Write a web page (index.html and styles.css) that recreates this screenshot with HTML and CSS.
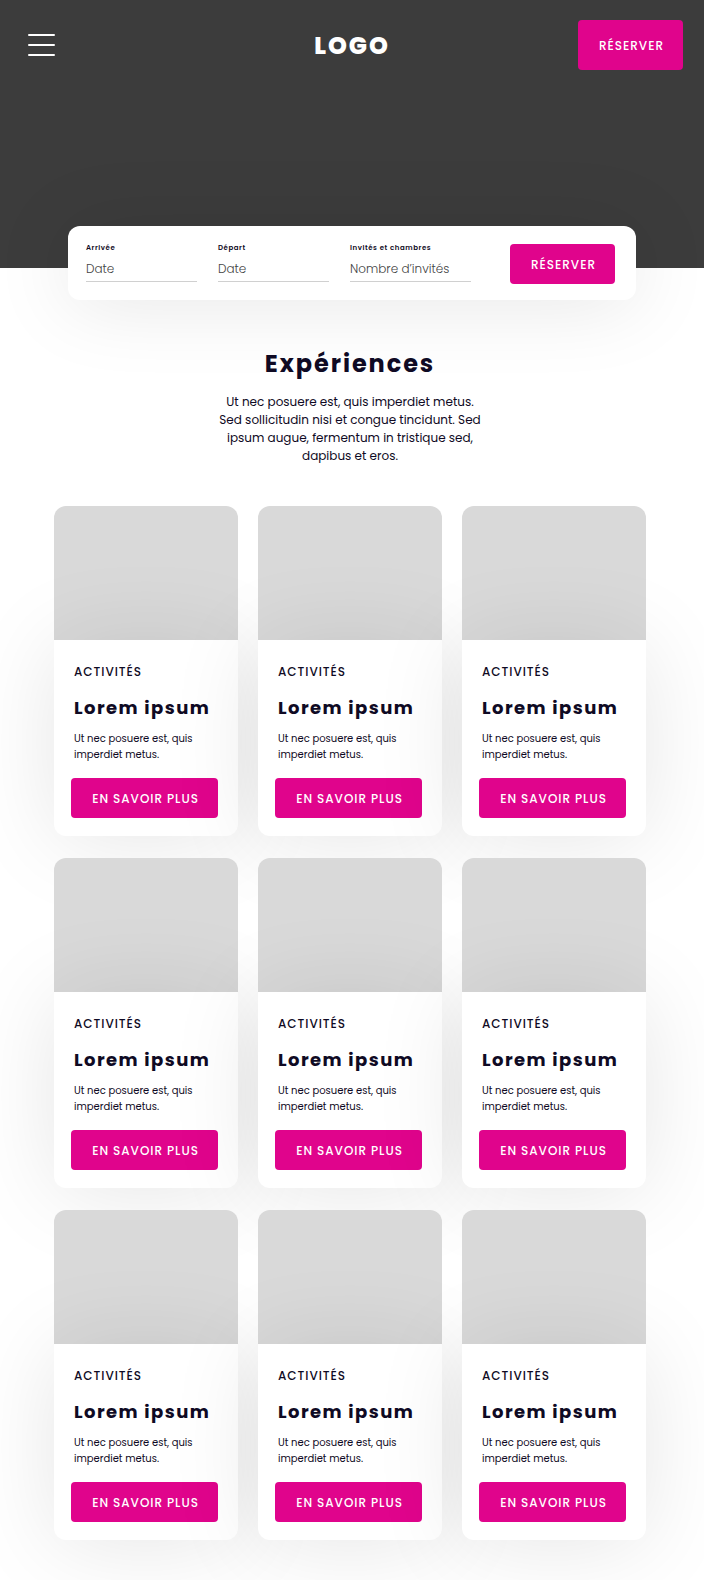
FILE: index.html
```html
<!DOCTYPE html>
<html lang="fr">
<head>
  <meta charset="UTF-8">
  <meta name="viewport" content="width=device-width, initial-scale=1">
  <title>Expériences</title>
  <link rel="stylesheet" href="styles.css">
</head>
<body>
  <header class="hero">
    <nav class="navbar">
      <button class="menu-btn" type="button" aria-label="Menu">
        <svg width="27" height="22" viewBox="0 0 27 22" fill="none" stroke="#fff" stroke-width="2" stroke-linecap="round">
          <path d="M1 1h25M1 11h25M1 21h25"/>
        </svg>
      </button>
      <a class="logo" href="#">LOGO</a>
      <button class="btn btn-nav" type="button">RÉSERVER</button>
    </nav>
  </header>

  <!-- Booking form -->
  <form class="search">
    <div class="field">
      <label for="arrivee">Arrivée</label>
      <input type="text" id="arrivee" placeholder="Date">
    </div>
    <div class="field">
      <label for="depart">Départ</label>
      <input type="text" id="depart" placeholder="Date">
    </div>
    <div class="field field-guests">
      <label for="invites">Invités et chambres</label>
      <input type="text" id="invites" placeholder="Nombre d’invités">
    </div>
    <button class="btn btn-search" type="button">RÉSERVER</button>
  </form>

  <main class="experiences">
    <h1>Expériences</h1>
    <p class="intro">Ut nec posuere est, quis imperdiet metus.<br>Sed sollicitudin nisi et congue tincidunt. Sed<br>ipsum augue, fermentum in tristique sed,<br>dapibus et eros.</p>

    <div class="cards">
      <article class="card">
        <div class="card-image"></div>
        <div class="card-body">
          <p class="category">ACTIVITÉS</p>
          <h2>Lorem ipsum</h2>
          <p class="text">Ut nec posuere est, quis<br>imperdiet metus.</p>
          <button class="btn btn-card" type="button">EN SAVOIR PLUS</button>
        </div>
      </article>
      <article class="card">
        <div class="card-image"></div>
        <div class="card-body">
          <p class="category">ACTIVITÉS</p>
          <h2>Lorem ipsum</h2>
          <p class="text">Ut nec posuere est, quis<br>imperdiet metus.</p>
          <button class="btn btn-card" type="button">EN SAVOIR PLUS</button>
        </div>
      </article>
      <article class="card">
        <div class="card-image"></div>
        <div class="card-body">
          <p class="category">ACTIVITÉS</p>
          <h2>Lorem ipsum</h2>
          <p class="text">Ut nec posuere est, quis<br>imperdiet metus.</p>
          <button class="btn btn-card" type="button">EN SAVOIR PLUS</button>
        </div>
      </article>
      <article class="card">
        <div class="card-image"></div>
        <div class="card-body">
          <p class="category">ACTIVITÉS</p>
          <h2>Lorem ipsum</h2>
          <p class="text">Ut nec posuere est, quis<br>imperdiet metus.</p>
          <button class="btn btn-card" type="button">EN SAVOIR PLUS</button>
        </div>
      </article>
      <article class="card">
        <div class="card-image"></div>
        <div class="card-body">
          <p class="category">ACTIVITÉS</p>
          <h2>Lorem ipsum</h2>
          <p class="text">Ut nec posuere est, quis<br>imperdiet metus.</p>
          <button class="btn btn-card" type="button">EN SAVOIR PLUS</button>
        </div>
      </article>
      <article class="card">
        <div class="card-image"></div>
        <div class="card-body">
          <p class="category">ACTIVITÉS</p>
          <h2>Lorem ipsum</h2>
          <p class="text">Ut nec posuere est, quis<br>imperdiet metus.</p>
          <button class="btn btn-card" type="button">EN SAVOIR PLUS</button>
        </div>
      </article>
      <article class="card">
        <div class="card-image"></div>
        <div class="card-body">
          <p class="category">ACTIVITÉS</p>
          <h2>Lorem ipsum</h2>
          <p class="text">Ut nec posuere est, quis<br>imperdiet metus.</p>
          <button class="btn btn-card" type="button">EN SAVOIR PLUS</button>
        </div>
      </article>
      <article class="card">
        <div class="card-image"></div>
        <div class="card-body">
          <p class="category">ACTIVITÉS</p>
          <h2>Lorem ipsum</h2>
          <p class="text">Ut nec posuere est, quis<br>imperdiet metus.</p>
          <button class="btn btn-card" type="button">EN SAVOIR PLUS</button>
        </div>
      </article>
      <article class="card">
        <div class="card-image"></div>
        <div class="card-body">
          <p class="category">ACTIVITÉS</p>
          <h2>Lorem ipsum</h2>
          <p class="text">Ut nec posuere est, quis<br>imperdiet metus.</p>
          <button class="btn btn-card" type="button">EN SAVOIR PLUS</button>
        </div>
      </article>
    </div>
  </main>
</body>
</html>
```
FILE: styles.css
```css
* {
  box-sizing: border-box;
  margin: 0;
  padding: 0;
}
body {
  font-family: Poppins, Inter, sans-serif;
  background: #fff;
  color: #0f0a24;
  overflow-x: hidden;
}

/* Header */
.hero {
  background: #3c3c3c;
  min-height: 268px;
  padding: 20px 21px 0;
}
.navbar {
  display: grid;
  grid-template-columns: 1fr auto 1fr;
  align-items: center;
}
.menu-btn {
  display: flex;
  justify-self: start;
  margin-left: 7px;
  background: none;
  border: none;
  cursor: pointer;
}
.logo {
  color: #fff;
  font-size: 24px;
  font-weight: 800;
  letter-spacing: 0.08em;
  text-decoration: none;
}

/* Buttons */
.btn {
  height: 40px;
  padding: 2px 0 0 2px;
  background: #e0048c;
  color: #fff;
  border: none;
  border-radius: 4px;
  font-family: inherit;
  font-size: 12px;
  font-weight: 500;
  letter-spacing: 0.08em;
  white-space: nowrap;
  cursor: pointer;
}
.btn-nav {
  width: 105px;
  height: 50px;
  justify-self: end;
}
.btn-search {
  width: 105px;
  margin-left: 18px;
}
.btn-card {
  width: 147px;
  margin-left: -3px;
}

/* Booking form */
.search {
  display: flex;
  align-items: flex-start;
  gap: 21px;
  margin: -42px 68px 0;
  padding: 18px 21px 16px 18px;
  background: #fff;
  border-radius: 12px;
  box-shadow: 0 4px 80px rgba(0, 0, 0, 0.1);
}
.field {
  flex: 1;
  min-width: 0;
}
.field-guests {
  flex: 0 0 121px;
}
.field label {
  display: block;
  font-size: 7px;
  font-weight: 600;
  line-height: 8px;
  letter-spacing: 0.08em;
}
.field input {
  display: block;
  width: 100%;
  height: 30px;
  padding-top: 4px;
  border: none;
  border-bottom: 1px solid #d0d0d0;
  background: none;
  font-family: inherit;
  font-size: 12px;
  font-weight: 300;
}
.field input::placeholder {
  color: #444;
  opacity: 1;
}

/* Experiences */
.experiences {
  padding: 46px 58px 40px 54px;
}
h1 {
  font-size: 24px;
  line-height: 36px;
  font-weight: 700;
  letter-spacing: 0.08em;
  text-align: center;
}
.intro {
  margin-top: 11px;
  font-size: 12px;
  line-height: 18px;
  text-align: center;
}
.cards {
  display: grid;
  grid-template-columns: repeat(3, 1fr);
  gap: 22px 20px;
  margin-top: 41px;
}
.card-image {
  height: 134px;
  background: #d9d9d9;
  border-radius: 12px 12px 0 0;
}
.card-body {
  padding: 23px 20px 18px;
  background: #fff;
  border-radius: 0 0 12px 12px;
  box-shadow: 0 4px 90px rgba(0, 0, 0, 0.1);
}
.category {
  font-size: 12px;
  line-height: 18px;
  font-weight: 500;
  letter-spacing: 0.08em;
}
.card h2 {
  margin-top: 13px;
  font-size: 18px;
  line-height: 28px;
  font-weight: 700;
  letter-spacing: 0.08em;
  white-space: nowrap;
}
.text {
  margin: 9px 0 15px;
  font-size: 10px;
  line-height: 16px;
}
```
